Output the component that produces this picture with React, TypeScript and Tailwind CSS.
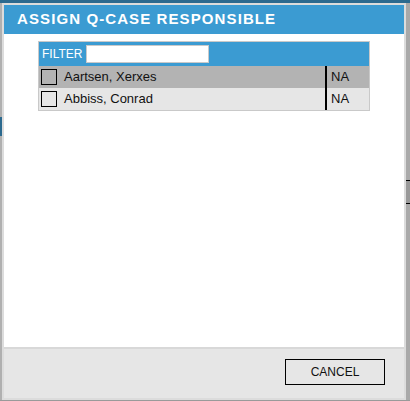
import React from "react";

const people = [
  { name: "Aartsen, Xerxes", status: "NA", shade: "bg-[#b3b3b3]" },
  { name: "Abbiss, Conrad", status: "NA", shade: "bg-[#e6e6e6]" },
];

export default function App() {
  return (
    <div className="flex h-[401px] w-[410px] flex-col overflow-hidden bg-[#a9a9a9] font-['Liberation_Sans',Arial,sans-serif]">
      <div className="h-[3px] shrink-0 bg-[#2c6a8f]" />
      <div className="flex min-h-0 flex-1">
        <div className="flex w-[2px] shrink-0 flex-col bg-[#b0b0b0]">
          <div className="mt-[114px] h-[19px] bg-[#2c6a8f]" />
        </div>
        <div className="flex w-[404px] shrink-0 flex-col border-2 border-[#dcdcdc] bg-white">
          <div className="flex h-[29px] shrink-0 items-center bg-[#3b9bd2] pl-[13px] text-[15px] font-bold tracking-[1.1px] text-white">
            ASSIGN Q-CASE RESPONSIBLE
          </div>
          <div className="flex-1 px-[34px] pt-[7px]">
            <div className="border border-[#c9c9c9]">
              <div className="flex h-[24px] items-center gap-[4px] bg-[#3b9bd2] pl-[3px] text-[12px] text-white">
                <span>FILTER</span>
                <input className="h-[18px] w-[123px] border border-[#c9c9c9] bg-white outline-none" />
              </div>
              {people.map((p) => (
                <div key={p.name} className={`flex h-[22px] items-center text-[13px] text-[#111] ${p.shade}`}>
                  <div className="ml-[2px] h-[16px] w-[16px] border border-black" />
                  <span className="ml-[7px] flex-1">{p.name}</span>
                  <div className="flex h-full w-[44px] items-center border-l-[2px] border-black pl-[4px]">{p.status}</div>
                </div>
              ))}
            </div>
          </div>
          <div className="flex h-[51px] shrink-0 items-end justify-end border-t-2 border-[#d8d8d8] bg-[#e6e6e6] pb-[13px] pr-[19px]">
            <button className="h-[26px] w-[100px] border border-black bg-[#e6e6e6] text-[12px] text-[#111]">CANCEL</button>
          </div>
        </div>
        <div className="flex flex-1 flex-col bg-[#a9a9a9]">
          <div className="mt-[177px] h-[24px] border-y border-black bg-[#999]" />
        </div>
      </div>
      <div className="h-[1px] shrink-0 bg-[#9a9a9a]" />
    </div>
  );
}
